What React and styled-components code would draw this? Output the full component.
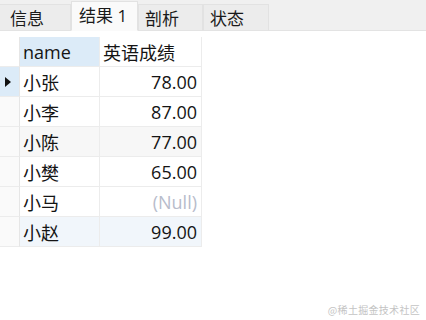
import React from "react";
import styled, { createGlobalStyle } from "styled-components";

const Global = createGlobalStyle`
  html, body { margin: 0; padding: 0; background: #ffffff; }
  body { width: 426px; height: 320px; overflow: hidden; font-family: "Open Sans", "Noto Sans CJK SC", sans-serif; }
`;

const Page = styled.div`
  position: relative;
  width: 426px;
  height: 320px;
  background: #ffffff;
`;

const TabBar = styled.div`
  display: flex;
  align-items: flex-end;
  height: 31px;
  background: #f0f0f0;
  border-bottom: 1px solid #e3e3e3;
  box-sizing: border-box;
`;

const Tab = styled.div`
  box-sizing: border-box;
  width: ${(p) => p.$w}px;
  height: ${(p) => (p.$active ? 30 : 27)}px;
  margin-bottom: -1px;
  display: flex;
  align-items: center;
  padding-left: ${(p) => p.$pad}px;
  font-family: "Open Sans", "Noto Sans CJK SC", sans-serif;
  font-size: 17px;
  color: #1a1a1a;
  background: ${(p) => (p.$active ? "#fafafa" : "#ececec")};
  border: 1px solid #e2e2e2;
  border-bottom: ${(p) => (p.$active ? "1px solid #fafafa" : "1px solid #e3e3e3")};
  border-left: ${(p) => (p.$first ? "none" : "1px solid #e2e2e2")};
  padding-bottom: ${(p) => (p.$active ? 3 : 0)}px;
`;

const Grid = styled.div`
  display: grid;
  grid-template-columns: 20px 80px 102px;
  margin-top: 6px;
  width: 202px;
`;

const Cell = styled.div`
  box-sizing: border-box;
  height: 30px;
  display: flex;
  align-items: center;
  justify-content: ${(p) => (p.$right ? "flex-end" : "flex-start")};
  padding: ${(p) => (p.$right ? "1px 4px 0 0" : "1px 0 0 3px")};
  font-size: 18px;
  color: ${(p) => (p.$null ? "#b8bccb" : "#141414")};
  background: ${(p) => p.$bg || "#ffffff"};
  border-right: 1px solid #ececec;
  border-bottom: 1px solid #ececec;
`;

const RowHead = styled.div`
  box-sizing: border-box;
  height: 30px;
  display: flex;
  align-items: center;
  justify-content: center;
  background: ${(p) => (p.$sel ? "#dcebf8" : "#fafafa")};
  border-right: 1px solid #e6e6e6;
  border-bottom: 1px solid #ececec;
`;

const Corner = styled(RowHead)`
  background: #ffffff;
`;

const Marker = styled.span`
  width: 0;
  height: 0;
  border-top: 5px solid transparent;
  border-bottom: 5px solid transparent;
  border-left: 6px solid #111;
  margin-left: -4px;
`;

const Watermark = styled.div`
  position: absolute;
  right: 6px;
  bottom: 3px;
  font-family: "Noto Sans CJK SC", sans-serif;
  font-size: 10px;
  color: #c4c4c4;
  letter-spacing: 0.3px;
`;

const rows = [
  { name: "小张", score: "78.00", bg: "#ffffff", sel: true },
  { name: "小李", score: "87.00", bg: "#ffffff" },
  { name: "小陈", score: "77.00", bg: "#f7f7f7" },
  { name: "小樊", score: "65.00", bg: "#ffffff" },
  { name: "小马", score: "(Null)", bg: "#ffffff", isNull: true },
  { name: "小赵", score: "99.00", bg: "#f1f6fb" },
];

export default function App() {
  return (
    <Page>
      <Global />
      <TabBar>
        <Tab $w={71} $pad={10} $first>信息</Tab>
        <Tab $w={67} $pad={7} $active>结果 1</Tab>
        <Tab $w={65} $pad={6}>剖析</Tab>
        <Tab $w={66} $pad={6}>状态</Tab>
      </TabBar>
      <Grid>
        <Corner />
        <Cell $bg="#dcebf8">name</Cell>
        <Cell>英语成绩</Cell>
        {rows.map((r) => (
          <React.Fragment key={r.name}>
            <RowHead $sel={r.sel}>{r.sel && <Marker />}</RowHead>
            <Cell $bg={r.bg}>{r.name}</Cell>
            <Cell $bg={r.bg} $right $null={r.isNull}>{r.score}</Cell>
          </React.Fragment>
        ))}
      </Grid>
      <Watermark>@稀土掘金技术社区</Watermark>
    </Page>
  );
}
